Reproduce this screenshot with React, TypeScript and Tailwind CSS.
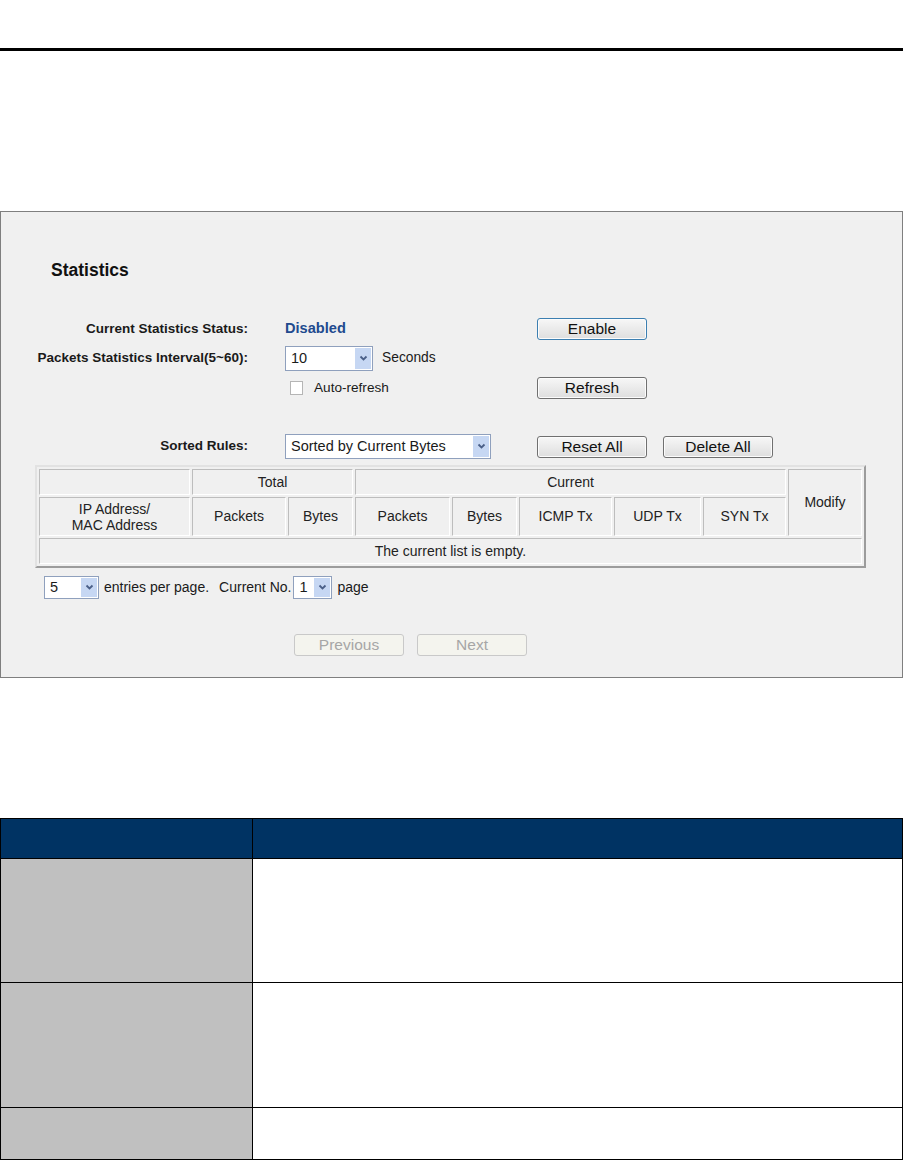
import React from "react";

function Chevron() {
  return (
    <svg width="9" height="7" viewBox="0 0 9 7" aria-hidden="true">
      <path d="M1.5 1.5 L4.5 4.5 L7.5 1.5" fill="none" stroke="#4a5f88" strokeWidth="1.8" />
    </svg>
  );
}

function Select({ value, className }: { value: string; className: string }) {
  return (
    <div className={`flex items-stretch border border-[#8fa0bd] bg-white ${className}`}>
      <span className="flex flex-1 items-center pl-[5px] text-[14.5px] text-[#1a1a1a]">{value}</span>
      <span className="my-px mr-px flex w-[16px] items-center justify-center bg-[#c6d7f3]">
        <Chevron />
      </span>
    </div>
  );
}

function Button({ label, focused = false, className = "" }: { label: string; focused?: boolean; className?: string }) {
  return (
    <div
      className={`flex h-[22px] w-[110px] items-center justify-center rounded-[3px] border bg-gradient-to-b from-[#f7f7f7] to-[#dedede] text-[15.5px] text-[#111] shadow-[inset_0_0_0_1px_#fcfcfc] ${
        focused ? "border-[#3c7fb1]" : "border-[#707070]"
      } ${className}`}
    >
      {label}
    </div>
  );
}

function DisabledButton({ label, className = "" }: { label: string; className?: string }) {
  return (
    <div
      className={`flex h-[22px] w-[110px] items-center justify-center rounded-[3px] border border-[#c9c9c9] bg-[#f4f4ee] text-[15.5px] text-[#a6a6a6] ${className}`}
    >
      {label}
    </div>
  );
}

const th = "border border-t-[#bdbdbd] border-l-[#bdbdbd] border-b-white border-r-white font-normal text-center align-middle p-0";

export default function App() {
  return (
    <div className="w-[903px] bg-white font-['Liberation_Sans',Arial,sans-serif] text-[#1a1a1a]">
      <div className="h-[48px]" />
      <div className="h-[3px] w-full bg-black" />

      <div className="mt-[160px] border border-[#7f7f7f] bg-[#f0f0f0] pb-[21px]">
        <h2 className="mt-[48px] pl-[50px] text-[17.5px] font-bold leading-[20px] text-[#111]">Statistics</h2>

        {/* Status */}
        <div className="mt-[38px] flex h-[22px] items-center">
          <div className="w-[247px] text-right text-[13.5px] font-bold">Current Statistics Status:</div>
          <div className="ml-[37px] w-[252px] text-[14.6px] font-bold text-[#214a8e]">Disabled</div>
          <Button label="Enable" focused />
        </div>

        {/* Interval */}
        <div className="mt-[6px] flex h-[25px] items-center">
          <div className="w-[247px] text-right text-[13.5px] font-bold">Packets Statistics Interval(5~60):</div>
          <div className="ml-[37px] flex h-full w-[252px] items-center">
            <Select value="10" className="h-[25px] w-[88px]" />
            <span className="ml-[9px] text-[13.8px]">Seconds</span>
          </div>
        </div>

        {/* Auto refresh */}
        <div className="mt-[6px] flex h-[22px] items-center">
          <div className="w-[247px]" />
          <div className="ml-[37px] flex w-[252px] items-center">
            <span className="ml-[5px] h-[14px] w-[13px] border border-[#b5b5b5] bg-white" />
            <span className="ml-[11px] text-[13.6px]">Auto-refresh</span>
          </div>
          <Button label="Refresh" />
        </div>

        {/* Sorted rules */}
        <div className="mt-[35px] flex h-[25px] items-center">
          <div className="w-[247px] text-right text-[13.5px] font-bold">Sorted Rules:</div>
          <div className="ml-[37px] flex h-full w-[252px] items-center">
            <Select value="Sorted by Current Bytes" className="h-[25px] w-[206px]" />
          </div>
          <Button label="Reset All" />
          <Button label="Delete All" className="ml-[16px]" />
        </div>

        {/* Statistics table */}
        <table className="ml-[34px] mt-[6px] table-fixed border-separate border-spacing-0.5 border-2 border-t-[#e2e2e2] border-l-[#e2e2e2] border-b-[#9c9c9c] border-r-[#9c9c9c] text-[14px] text-[#222]">
          <colgroup>
            <col className="w-[151px]" />
            <col className="w-[94px]" />
            <col className="w-[65px]" />
            <col className="w-[95px]" />
            <col className="w-[65px]" />
            <col className="w-[93px]" />
            <col className="w-[87px]" />
            <col className="w-[83px]" />
            <col className="w-[74px]" />
          </colgroup>
          <thead>
            <tr className="h-[26px]">
              <th className={th} />
              <th className={th} colSpan={2}>Total</th>
              <th className={th} colSpan={5}>Current</th>
              <th className={th} rowSpan={2}>Modify</th>
            </tr>
            <tr className="h-[39px]">
              <th className={`${th} leading-[16px]`}>
                IP Address/
                <br />
                MAC Address
              </th>
              <th className={th}>Packets</th>
              <th className={th}>Bytes</th>
              <th className={th}>Packets</th>
              <th className={th}>Bytes</th>
              <th className={th}>ICMP Tx</th>
              <th className={th}>UDP Tx</th>
              <th className={th}>SYN Tx</th>
            </tr>
          </thead>
          <tbody>
            <tr className="h-[26px]">
              <td className={th} colSpan={9}>The current list is empty.</td>
            </tr>
          </tbody>
        </table>

        {/* Paging */}
        <div className="mt-[8px] flex h-[23px] items-center text-[14px]">
          <Select value="5" className="ml-[43px] h-[23px] w-[55px]" />
          <span className="ml-[5px]">entries per page.</span>
          <span className="ml-[10px]">Current No.</span>
          <Select value="1" className="ml-[2px] h-[23px] w-[39px]" />
          <span className="ml-[5px]">page</span>
        </div>

        <div className="mt-[35px] flex">
          <DisabledButton label="Previous" className="ml-[293px]" />
          <DisabledButton label="Next" className="ml-[13px]" />
        </div>
      </div>

      {/* Description table */}
      <table className="mt-[140px] w-full table-fixed border-collapse">
        <colgroup>
          <col className="w-[252px]" />
          <col />
        </colgroup>
        <tbody>
          <tr className="h-[40px]">
            <td className="border border-black bg-[#003363]" />
            <td className="border border-black bg-[#003363]" />
          </tr>
          <tr className="h-[124px]">
            <td className="border border-black bg-[#c0c0c0]" />
            <td className="border border-black bg-white" />
          </tr>
          <tr className="h-[125px]">
            <td className="border border-black bg-[#c0c0c0]" />
            <td className="border border-black bg-white" />
          </tr>
          <tr className="h-[52px]">
            <td className="border border-black bg-[#c0c0c0]" />
            <td className="border border-black bg-white" />
          </tr>
        </tbody>
      </table>
    </div>
  );
}
